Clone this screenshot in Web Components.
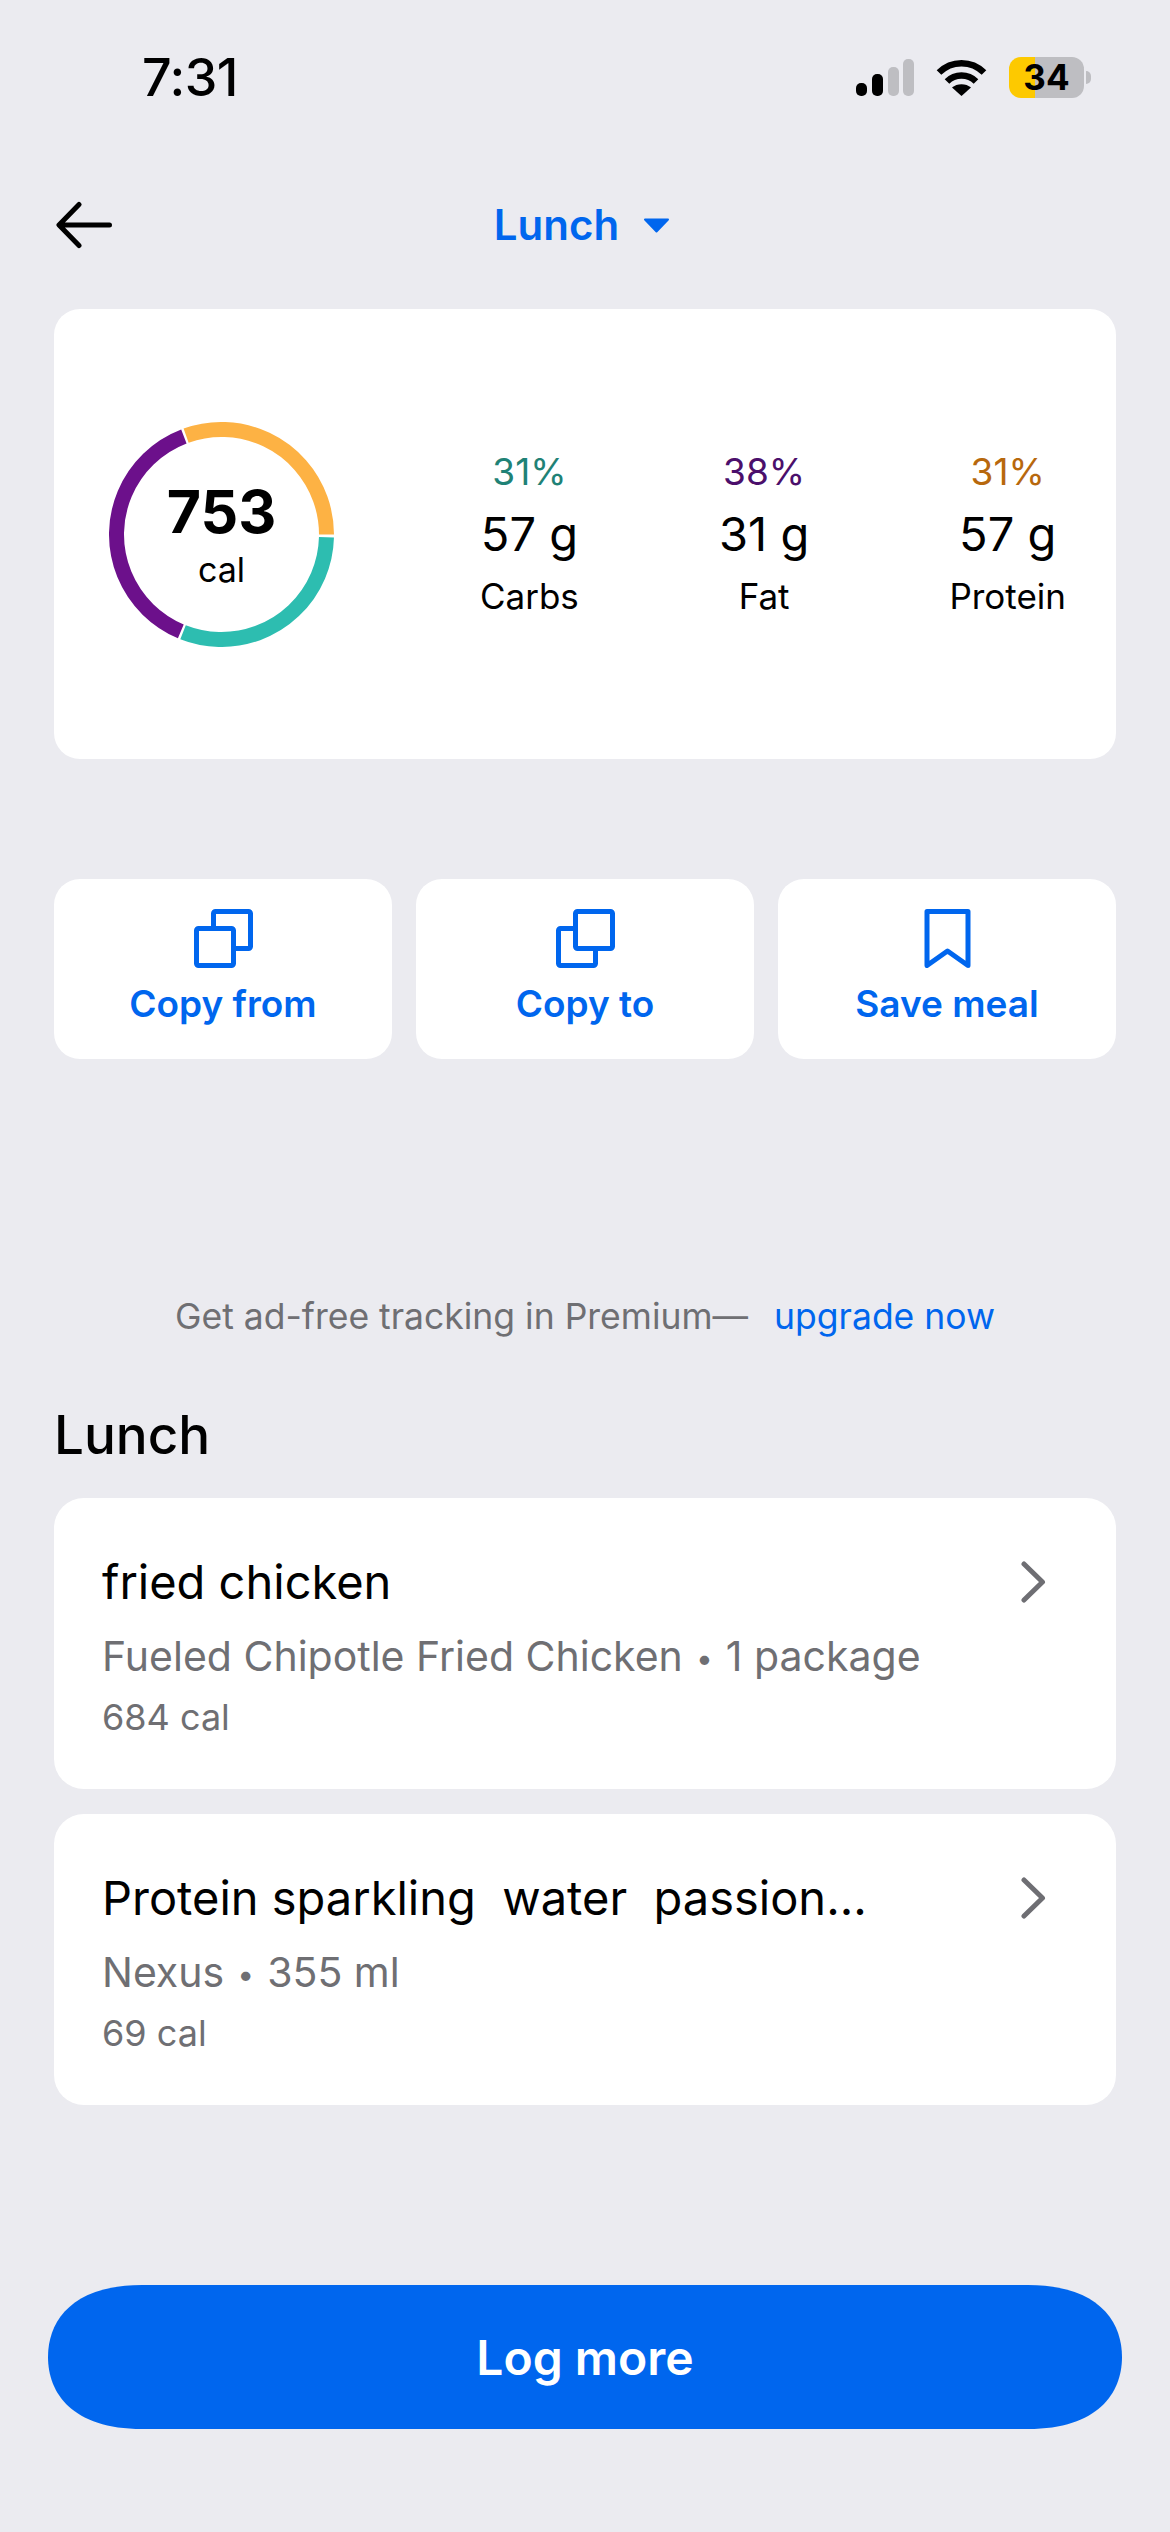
<!DOCTYPE html>
<html lang="en">
<head>
<meta charset="utf-8">
<title>Lunch</title>
<style>
  html, body { margin: 0; padding: 0; background: #ebebf0; }
  body { font-family: Inter, "Liberation Sans", sans-serif; color: #000; }
</style>
</head>
<body>
<meal-screen>
  <status-bar time="7:31" battery="34"></status-bar>
  <meal-nav>Lunch</meal-nav>
  <macro-card calories="753">
    <macro-stat percent="31%" grams="57 g" color="#1f8276">Carbs</macro-stat>
    <macro-stat percent="38%" grams="31 g" color="#4b0f6b">Fat</macro-stat>
    <macro-stat percent="31%" grams="57 g" color="#b7680d">Protein</macro-stat>
  </macro-card>
  <action-row>
    <action-button icon="copy-from">Copy from</action-button>
    <action-button icon="copy-to">Copy to</action-button>
    <action-button icon="save">Save meal</action-button>
  </action-row>
  <premium-note>Get ad-free tracking in Premium—<a slot="link">upgrade now</a></premium-note>
  <food-list heading="Lunch">
    <food-row brand="Fueled Chipotle Fried Chicken" serving="1 package" calories="684 cal">fried chicken</food-row>
    <food-row brand="Nexus" serving="355 ml" calories="69 cal">Protein sparkling  water  passion...</food-row>
  </food-list>
  <log-button>Log more</log-button>
</meal-screen>

<script>
(function () {
  'use strict';

  var BLUE = '#0066ee';

  function define(name, html) {
    customElements.define(name, class extends HTMLElement {
      constructor() {
        super();
        this.attachShadow({ mode: 'open' });
      }
      connectedCallback() {
        this.shadowRoot.innerHTML = typeof html === 'function' ? html(this) : html;
      }
    });
  }

  define('meal-screen', [
    '<style>',
    ':host{display:flex;flex-direction:column;width:1170px;height:2532px;box-sizing:border-box;padding:0 54px;background:#ebebf0;overflow:hidden}',
    '</style>',
    '<slot></slot>'
  ].join(''));

  define('status-bar', function (el) {
    return [
      '<style>',
      ':host{display:flex;align-items:flex-start;justify-content:space-between;height:175px;margin:0 -54px;box-sizing:border-box;padding:57px 79px 0 142px}',
      '.time{font-size:52px;line-height:42px;font-weight:500;letter-spacing:-.5px}',
      '.icons{display:flex;align-items:flex-start;gap:22px}',
      'svg{display:block}',
      '.battery{width:75px;height:41px;border-radius:12px;overflow:hidden;background:linear-gradient(90deg,#fdc900 0 26px,#bebec2 26px);text-align:center;font-size:35px;line-height:41px;font-weight:700;color:#000}',
      '.tip{width:5px;height:13px;margin:14px 0 0 2px;background:#bebec2;border-radius:0 5px 5px 0}',
      '.batt-wrap{display:flex}',
      '</style>',
      '<div class="time">' + el.getAttribute('time') + '</div>',
      '<div class="icons">',
      '<svg width="58" height="37" viewBox="0 0 58 37" style="margin-top:2px"><rect x="0" y="24" width="11" height="13" rx="5" fill="#000"/><rect x="16" y="15" width="11" height="22" rx="5" fill="#000"/><rect x="32" y="8" width="11" height="29" rx="5" fill="#bebec2"/><rect x="47" y="0" width="11" height="37" rx="5" fill="#bebec2"/></svg>',
      '<svg width="51" height="37" viewBox="0 0 51 37" style="margin-top:2px"><path d="M3 13.5C15.5 1 35.5 1 48 13.5M11 22.5C19 14.5 32 14.5 40 22.5" fill="none" stroke="#000" stroke-width="6.5"/><path d="M25.5 37L16 28.500C21 24 30 24 35 28.500Z" fill="#000"/></svg>',
      '<div class="batt-wrap"><div class="battery">' + el.getAttribute('battery') + '</div><div class="tip"></div></div>',
      '</div>'
    ].join('');
  });

  define('meal-nav', [
    '<style>',
    ':host{display:grid;grid-template-columns:1fr auto 1fr;align-items:center;height:100px;margin-bottom:34px}',
    '.title{display:flex;align-items:center;gap:24px;color:' + BLUE + ';font-size:42px;line-height:50px;font-weight:600;margin-left:-6px}',
    'svg{display:block}',
    '</style>',
    '<svg width="60" height="48" viewBox="0 0 60 48"><path d="M55.500 24H6M25 3.500L5 24L25 44.500" fill="none" stroke="#000" stroke-width="5" stroke-linecap="round" stroke-linejoin="round"/></svg>',
    '<div class="title"><slot></slot>',
    '<svg width="27" height="15" viewBox="0 0 27 15"><path d="M2 1.500H25L13.500 13.500Z" fill="' + BLUE + '" stroke="' + BLUE + '" stroke-width="2" stroke-linejoin="round"/></svg>',
    '</div><span></span>'
  ].join(''));

  define('macro-card', function (el) {
    return [
      '<style>',
      ':host{display:flex;align-items:center;height:450px;box-sizing:border-box;padding:0 50px 0 55px;background:#fff;border-radius:26px;margin-bottom:120px}',
      '.ring{position:relative;width:225px;height:225px;flex:none}',
      '.ring svg{display:block}',
      '.label{position:absolute;left:0;right:0;top:0;bottom:0;display:flex;flex-direction:column;align-items:center}',
      '.cal{font-size:59px;line-height:70px;font-weight:700;margin-top:55px}',
      '.unit{font-size:34px;line-height:40px;margin-top:3px}',
      '.stats{flex:1;display:flex;justify-content:space-between;margin-left:146px}',
      '</style>',
      '<div class="ring">',
      '<svg width="225" height="225" viewBox="0 0 225 225" fill="none" stroke-width="15">',
      '<circle cx="112.5" cy="112.5" r="105" pathLength="360" stroke="#fdb244" stroke-dasharray="109.700 360" transform="rotate(250.300 112.500 112.500)"/>',
      '<circle cx="112.5" cy="112.5" r="105" pathLength="360" stroke="#2dbdb0" stroke-dasharray="110 360" transform="rotate(1.500 112.500 112.500)"/>',
      '<circle cx="112.5" cy="112.5" r="105" pathLength="360" stroke="#6c108b" stroke-dasharray="136.200 360" transform="rotate(112.800 112.500 112.500)"/>',
      '</svg>',
      '<div class="label"><div class="cal">' + el.getAttribute('calories') + '</div><div class="unit">cal</div></div>',
      '</div>',
      '<div class="stats"><slot></slot></div>'
    ].join('');
  });

  define('macro-stat', function (el) {
    return [
      '<style>',
      ':host{display:flex;flex-direction:column;align-items:center;white-space:nowrap}',
      '.pct{font-size:37px;line-height:40px;color:' + el.getAttribute('color') + '}',
      '.grams{font-size:47px;line-height:56px;font-weight:400;margin-top:14px}',
      '.name{font-size:35px;line-height:40px;margin-top:14px}',
      '</style>',
      '<div class="pct">' + el.getAttribute('percent') + '</div>',
      '<div class="grams">' + el.getAttribute('grams') + '</div>',
      '<div class="name"><slot></slot></div>'
    ].join('');
  });

  define('action-row', [
    '<style>:host{display:grid;grid-template-columns:repeat(3,1fr);gap:24px}</style>',
    '<slot></slot>'
  ].join(''));

  var ICONS = {
    'copy-from': '<svg width="59" height="59" viewBox="0 0 59 59"><rect x="19.500" y="2.500" width="37" height="37" rx="2" fill="none" stroke="' + BLUE + '" stroke-width="5" stroke-linejoin="round"/><rect x="2.500" y="19.500" width="37" height="37" rx="2" fill="#fff" stroke="' + BLUE + '" stroke-width="5" stroke-linejoin="round"/></svg>',
    'copy-to': '<svg width="59" height="59" viewBox="0 0 59 59"><rect x="2.500" y="19.500" width="37" height="37" rx="2" fill="none" stroke="' + BLUE + '" stroke-width="5" stroke-linejoin="round"/><rect x="19.500" y="2.500" width="37" height="37" rx="2" fill="#fff" stroke="' + BLUE + '" stroke-width="5" stroke-linejoin="round"/></svg>',
    'save': '<svg width="59" height="59" viewBox="0 0 59 59"><path d="M9 2.500H50V56.500L29.500 42L9 56.500Z" fill="none" stroke="' + BLUE + '" stroke-width="5" stroke-linejoin="round"/></svg>'
  };

  define('action-button', function (el) {
    return [
      '<style>',
      ':host{display:flex;flex-direction:column;align-items:center;height:180px;box-sizing:border-box;padding-top:30px;background:#fff;border-radius:26px;color:' + BLUE + ';font-size:37px;line-height:44px;font-weight:600}',
      'svg{display:block}',
      '.text{margin-top:14px}',
      '</style>',
      ICONS[el.getAttribute('icon')],
      '<div class="text"><slot></slot></div>'
    ].join('');
  });

  define('premium-note', [
    '<style>',
    ':host{display:flex;justify-content:center;gap:26px;margin-top:236px;color:#6f6f73;font-size:35.500px;line-height:44px;white-space:nowrap}',
    '.link{color:' + BLUE + '}',
    '</style>',
    '<span><slot></slot></span><span class="link"><slot name="link"></slot></span>'
  ].join(''));

  define('food-list', function (el) {
    return [
      '<style>',
      ':host{display:flex;flex-direction:column;gap:25px;margin-top:66px}',
      'h2{margin:0 0 8px;font-size:53px;line-height:60px;font-weight:500}',
      '</style>',
      '<h2>' + el.getAttribute('heading') + '</h2>',
      '<slot></slot>'
    ].join('');
  });

  define('food-row', function (el) {
    return [
      '<style>',
      ':host{display:flex;justify-content:space-between;height:291px;box-sizing:border-box;padding:55px 70px 0 48px;background:#fff;border-radius:30px}',
      '.title{font-size:47px;line-height:58px;white-space:pre}',
      '.detail{font-size:41px;line-height:50px;color:#6f6f73;margin-top:20px}',
      '.dot{display:inline-block;width:43px;text-align:center;font-size:30px;line-height:30px;vertical-align:2px}',
      '.cal{font-size:36px;line-height:42px;color:#6f6f73;margin-top:15px}',
      'svg{display:block;margin-top:8px}',
      '</style>',
      '<div><div class="title"><slot></slot></div>',
      '<div class="detail">' + el.getAttribute('brand') + '<span class="dot">•</span>' + el.getAttribute('serving') + '</div>',
      '<div class="cal">' + el.getAttribute('calories') + '</div></div>',
      '<svg width="25" height="42" viewBox="0 0 25 42"><path d="M3 3L21.500 21L3 39" fill="none" stroke="#6e6e73" stroke-width="5" stroke-linecap="round" stroke-linejoin="round"/></svg>'
    ].join('');
  });

  define('log-button', [
    '<style>',
    ':host{display:flex;align-items:center;justify-content:center;width:1074px;height:144px;margin:180px 0 0 -6px;background:' + BLUE + ';color:#fff;font-size:48px;font-weight:600;',
    'clip-path:path("M94 0H980C1050 0 1074 36 1074 72C1074 108 1050 144 980 144H94C24 144 0 108 0 72C0 36 24 0 94 0Z")}',
    '</style>',
    '<slot></slot>'
  ].join(''));
})();
</script>
</body>
</html>
